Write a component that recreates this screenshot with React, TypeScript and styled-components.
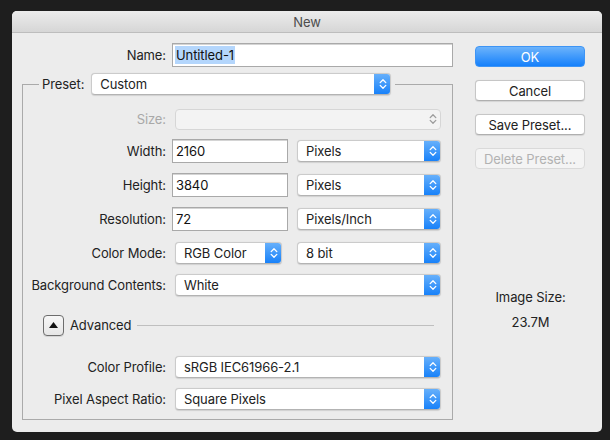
import React from "react";
import styled, { createGlobalStyle, css } from "styled-components";

const Global = createGlobalStyle`
  html, body { margin: 0; padding: 0; background: #1e1e1e; }
  body { font-family: "Inter", "Noto Sans", sans-serif; font-size: 13px; color: #222; letter-spacing: -0.1px; }
  * { box-sizing: border-box; }
`;

const Screen = styled.div`
  width: 610px;
  height: 440px;
  padding: 11px 0 0 12px;
`;

const Dialog = styled.div`
  width: 590px;
  height: 421px;
  background: #ececec;
  border-radius: 5px;
  overflow: hidden;
  display: flex;
  flex-direction: column;
`;

const TitleBar = styled.div`
  height: 22px;
  flex: none;
  background: linear-gradient(#ececec, #d6d6d6);
  border-bottom: 1px solid #bdbdbd;
  display: flex;
  align-items: center;
  justify-content: center;
  color: #4c4c4c;
  font-size: 13px;
  padding-top: 1px;
`;

const Body = styled.div`
  display: flex;
  padding: 10px 0 0 10px;
  gap: 22px;
`;

const LeftColumn = styled.div`
  width: 431px;
  display: flex;
  flex-direction: column;
`;

const RightColumn = styled.div`
  width: 110px;
  display: flex;
  flex-direction: column;
  padding-top: 3px;
  gap: 13px;
`;

const NameRow = styled.div`
  display: flex;
  align-items: center;
  height: 24px;
  gap: 6px;
`;

const Label = styled.span<{ $w?: number; $disabled?: boolean }>`
  width: ${(p) => p.$w ?? 143}px;
  flex: none;
  text-align: right;
  white-space: nowrap;
  color: ${(p) => (p.$disabled ? "#a8a8a8" : "#222")};
`;

const TextField = styled.div<{ $w: number }>`
  width: ${(p) => p.$w}px;
  height: 24px;
  flex: none;
  background: #fff;
  border: 1px solid #a9a9a9;
  box-shadow: inset 0 1px 0 #d4d4d4;
  display: flex;
  align-items: center;
  padding-left: 2px;
  color: #111;
`;

const Selected = styled.span`
  background: #b4d6fc;
  padding: 1px 1px;
`;

const Group = styled.fieldset`
  margin: 6px 0 0 0;
  padding: 12px 0 8px 0;
  border: 1px solid #aaaaaa;
  min-width: 0;
`;

const Legend = styled.legend`
  margin-left: 16px;
  padding: 0 4px 0 3px;
`;

const LegendInner = styled.span`
  display: flex;
  align-items: center;
  gap: 7px;
`;

const Row = styled.div<{ $mt?: number }>`
  display: flex;
  align-items: center;
  height: 24px;
  margin-top: ${(p) => p.$mt ?? 0}px;
  gap: 6px;
`;

const PopupBox = styled.div<{ $w: number; $disabled?: boolean; $ml?: number }>`
  position: relative;
  width: ${(p) => p.$w}px;
  height: ${(p) => (p.$disabled ? 21 : 22)}px;
  flex: none;
  margin-left: ${(p) => p.$ml ?? 3}px;
  border-radius: 4px;
  display: flex;
  align-items: center;
  padding-left: 8px;
  overflow: hidden;
  ${(p) =>
    p.$disabled
      ? css`
          background: #f3f3f3;
          border: 1px solid #d6d6d6;
        `
      : css`
          background: #fff;
          border: 1px solid #cbcbcb;
          border-bottom-color: #b3b3b3;
          box-shadow: 0 0.5px 1px rgba(0, 0, 0, 0.12);
        `}
`;

const PopupText = styled.span`
  flex: 1;
  white-space: nowrap;
  color: #222;
`;

const Arrows = styled.span<{ $disabled?: boolean }>`
  width: 17px;
  align-self: stretch;
  flex: none;
  display: flex;
  align-items: center;
  justify-content: center;
  margin: -1px -1px -1px 0;
  border-radius: 0 4px 4px 0;
  ${(p) =>
    p.$disabled
      ? css`
          background: transparent;
        `
      : css`
          background: linear-gradient(#6ab2fb, #147ff9);
        `}
`;

const Stepper = ({ disabled }: { disabled?: boolean }) => (
  <Arrows $disabled={disabled}>
    <svg width="8" height="12" viewBox="0 0 8 12">
      <path
        d="M1.2 4.6 L4 1.8 L6.8 4.6 M1.2 7.4 L4 10.2 L6.8 7.4"
        fill="none"
        stroke={disabled ? "#9c9c9c" : "#ffffff"}
        strokeWidth="1.3"
        strokeLinecap="round"
        strokeLinejoin="round"
      />
    </svg>
  </Arrows>
);

const Popup = ({
  w,
  text,
  disabled,
  ml,
}: {
  w: number;
  text?: string;
  disabled?: boolean;
  ml?: number;
}) => (
  <PopupBox $w={w} $disabled={disabled} $ml={ml}>
    <PopupText>{text}</PopupText>
    <Stepper disabled={disabled} />
  </PopupBox>
);

const NumberField = styled(TextField)`
  padding-left: 3px;
`;

const AdvancedRow = styled(Row)`
  padding-left: 20px;
  padding-right: 18px;
`;

const Disclosure = styled.div`
  width: 21px;
  height: 21px;
  flex: none;
  border: 1px solid #6d6d6d;
  border-radius: 4px;
  background: linear-gradient(#f7f7f7, #e6e6e6);
  display: flex;
  align-items: center;
  justify-content: center;
  box-shadow: 0 1px 0 rgba(0, 0, 0, 0.1);
`;

const Rule = styled.div`
  flex: 1;
  height: 1px;
  background: #bfbfbf;
`;

const Button = styled.div<{ $variant?: "default" | "primary" | "disabled" }>`
  height: 21px;
  border-radius: 4px;
  display: flex;
  align-items: center;
  justify-content: center;
  white-space: nowrap;
  ${(p) =>
    p.$variant === "primary"
      ? css`
          background: linear-gradient(#6cb3fb, #1580fb);
          color: #fff;
          border: 1px solid #3d94f5;
        `
      : p.$variant === "disabled"
      ? css`
          background: #f4f4f4;
          color: #b2b2b2;
          border: 1px solid #d9d9d9;
        `
      : css`
          background: #fff;
          color: #222;
          border: 1px solid #c6c6c6;
          border-bottom-color: #afafaf;
          box-shadow: 0 0.5px 1px rgba(0, 0, 0, 0.1);
        `}
`;

const Info = styled.div`
  margin-top: 107px;
  display: flex;
  flex-direction: column;
  align-items: center;
  gap: 9px;
  padding-left: 1px;
`;

const InfoText = styled.div`
  height: 16px;
  line-height: 16px;
`;

export default function App() {
  return (
    <>
      <Global />
      <Screen>
        <Dialog>
          <TitleBar>New</TitleBar>
          <Body>
            <LeftColumn>
              <NameRow>
                <Label $w={144}>Name:</Label>
                <TextField $w={281}>
                  <Selected>Untitled-1</Selected>
                </TextField>
              </NameRow>
              <Group>
                <Legend>
                  <LegendInner>
                    <span>Preset:</span>
                    <Popup w={300} text="Custom" ml={0} />
                  </LegendInner>
                </Legend>
                <Row>
                  <Label $disabled>Size:</Label>
                  <Popup w={266} disabled />
                </Row>
                <Row $mt={8}>
                  <Label>Width:</Label>
                  <NumberField $w={116}>2160</NumberField>
                  <Popup w={144} text="Pixels" />
                </Row>
                <Row $mt={10}>
                  <Label>Height:</Label>
                  <NumberField $w={116}>3840</NumberField>
                  <Popup w={144} text="Pixels" />
                </Row>
                <Row $mt={10}>
                  <Label>Resolution:</Label>
                  <NumberField $w={116}>72</NumberField>
                  <Popup w={144} text="Pixels/Inch" />
                </Row>
                <Row $mt={10}>
                  <Label>Color Mode:</Label>
                  <Popup w={107} text="RGB Color" />
                  <Popup w={144} text="8 bit" ml={9} />
                </Row>
                <Row $mt={8}>
                  <Label>Background Contents:</Label>
                  <Popup w={266} text="White" />
                </Row>
                <AdvancedRow $mt={16}>
                  <Disclosure>
                    <svg width="9" height="6" viewBox="0 0 9 6">
                      <path d="M4.5 0 L9 6 L0 6 Z" fill="#111" />
                    </svg>
                  </Disclosure>
                  <span>Advanced</span>
                  <Rule />
                </AdvancedRow>
                <Row $mt={18}>
                  <Label>Color Profile:</Label>
                  <Popup w={266} text="sRGB IEC61966-2.1" />
                </Row>
                <Row $mt={8}>
                  <Label>Pixel Aspect Ratio:</Label>
                  <Popup w={266} text="Square Pixels" />
                </Row>
              </Group>
            </LeftColumn>
            <RightColumn>
              <Button $variant="primary">OK</Button>
              <Button>Cancel</Button>
              <Button>Save Preset...</Button>
              <Button $variant="disabled">Delete Preset...</Button>
              <Info>
                <InfoText>Image Size:</InfoText>
                <InfoText>23.7M</InfoText>
              </Info>
            </RightColumn>
          </Body>
        </Dialog>
      </Screen>
    </>
  );
}
